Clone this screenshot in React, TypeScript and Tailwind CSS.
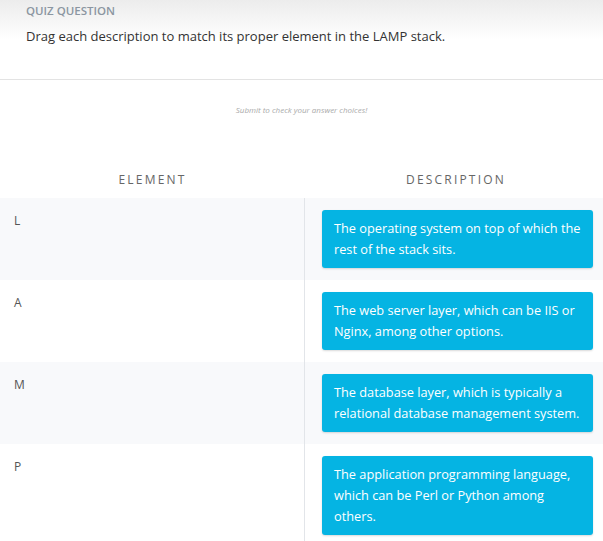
import React from "react";

const rows = [
  { el: "L", desc: "The operating system on top of which the rest of the stack sits.", gray: true },
  { el: "A", desc: "The web server layer, which can be IIS or Nginx, among other options.", gray: false },
  { el: "M", desc: "The database layer, which is typically a relational database management system.", gray: true },
  { el: "P", desc: "The application programming language, which can be Perl or Python among others.", gray: false },
];

export default function App() {
  return (
    <div className="w-[603px] h-[541px] overflow-hidden bg-white" style={{ fontFamily: '"Open Sans", sans-serif' }}>
      <div className="h-[80px] border-b border-[#e3e3e3] bg-gradient-to-b from-[#ececec] via-white to-white px-[26px] pt-[3px]">
        <div className="text-[11.5px] font-semibold text-[#8b96a1] leading-[16px]">QUIZ QUESTION</div>
        <div className="mt-[8px] text-[13px] text-[#333] leading-[18px]">Drag each description to match its proper element in the LAMP stack.</div>
      </div>
      <div className="pt-[24px] text-center text-[8px] italic text-[#aaaaaa] leading-[12px]">Submit to check your answer choices!</div>
      <div className="mt-[45px] flex h-[37px] items-center text-[12px] tracking-[2.2px] text-[#666]">
        <div className="w-[305px] text-center">ELEMENT</div>
        <div className="flex-1 text-center pl-[4px]">DESCRIPTION</div>
      </div>
      <div>
        {rows.map((r) => (
          <div key={r.el} className={`flex ${r.gray ? "bg-[#f8f9fb]" : "bg-white"}`}>
            <div className="w-[305px] border-r border-[#e2e5e9] pl-[14px] pt-[14px] text-[12px] text-[#555]">{r.el}</div>
            <div className="flex-1 pl-[17px] pr-[10px] py-[12px]">
              <div className="rounded-[3px] bg-[#05b4e3] px-[12px] py-[8px] text-[12.75px] leading-[21px] text-white shadow-[0_1px_2px_rgba(0,0,0,0.15)]">
                {r.desc}
              </div>
            </div>
          </div>
        ))}
      </div>
    </div>
  );
}
